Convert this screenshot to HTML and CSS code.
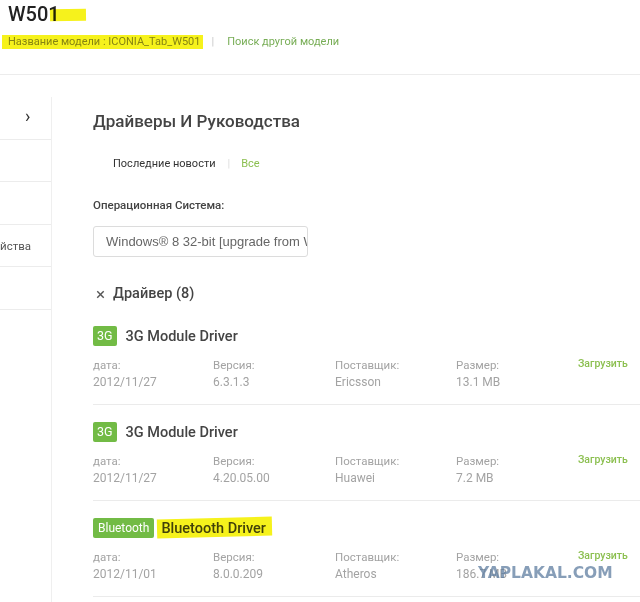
FILE: index.html
```html
<!DOCTYPE html>
<html lang="ru">
<head>
<meta charset="utf-8">
<title>W501</title>
<link rel="stylesheet" href="styles.css">
</head>
<body>
<header class="top">
  <h1 class="model"><span class="mark mark-title">W501</span></h1>
  <div class="sub">
    <span class="mark mark-sub">Название модели : ICONIA_Tab_W501</span>
    <span class="sep">|</span>
    <a class="green-link" href="#">Поиск другой модели</a>
  </div>
</header>
<div class="layout">
  <aside class="side">
    <div class="side-row"><span class="chev">›</span></div>
    <div class="side-row"></div>
    <div class="side-row"></div>
    <div class="side-row side-text">йства</div>
    <div class="side-row"></div>
  </aside>
  <main class="main">
    <h2 class="heading">Драйверы И Руководства</h2>
    <div class="tabs">
      <span class="tab">Последние новости</span>
      <span class="tab-sep">|</span>
      <span class="tab tab-all">Все</span>
    </div>
    <div class="os-label">Операционная Система:</div>
    <div class="select"><span class="select-text">Windows® 8 32-bit [upgrade from Windows 7]</span></div>
    <div class="group"><span class="x">×</span>Драйвер (8)</div>

    <div class="item">
      <div class="item-head"><span class="badge">3G</span><span class="title">3G Module Driver</span></div>
      <div class="meta">
        <div class="col"><div class="lbl">дата:</div><div class="val">2012/11/27</div></div>
        <div class="col"><div class="lbl">Версия:</div><div class="val">6.3.1.3</div></div>
        <div class="col"><div class="lbl">Поставщик:</div><div class="val">Ericsson</div></div>
        <div class="col"><div class="lbl">Размер:</div><div class="val">13.1 MB</div></div>
        <div class="col"><a class="dl" href="#">Загрузить</a></div>
      </div>
    </div>

    <div class="item">
      <div class="item-head"><span class="badge">3G</span><span class="title">3G Module Driver</span></div>
      <div class="meta">
        <div class="col"><div class="lbl">дата:</div><div class="val">2012/11/27</div></div>
        <div class="col"><div class="lbl">Версия:</div><div class="val">4.20.05.00</div></div>
        <div class="col"><div class="lbl">Поставщик:</div><div class="val">Huawei</div></div>
        <div class="col"><div class="lbl">Размер:</div><div class="val">7.2 MB</div></div>
        <div class="col"><a class="dl" href="#">Загрузить</a></div>
      </div>
    </div>

    <div class="item">
      <div class="item-head"><span class="badge badge-wide">Bluetooth</span><span class="title mark mark-bt">Bluetooth Driver</span></div>
      <div class="meta">
        <div class="col"><div class="lbl">дата:</div><div class="val">2012/11/01</div></div>
        <div class="col"><div class="lbl">Версия:</div><div class="val">8.0.0.209</div></div>
        <div class="col"><div class="lbl">Поставщик:</div><div class="val">Atheros</div></div>
        <div class="col"><div class="lbl">Размер:</div><div class="val">186.7 MB</div></div>
        <div class="col"><a class="dl" href="#">Загрузить</a></div>
      </div>
    </div>
  </main>
</div>
<div class="watermark">YAPLAKAL.COM</div>
</body>
</html>
```

FILE: styles.css
```css
* { box-sizing: border-box; }
html, body { margin: 0; padding: 0; background: #fff; }
body {
  font-family: Roboto, "Noto Sans", sans-serif;
  color: #333;
  width: 640px;
  height: 602px;
  overflow: hidden;
  position: relative;
}
a { text-decoration: none; }

.mark { position: relative; }
.mark::after {
  content: "";
  position: absolute;
  background: #f6f21c;
  mix-blend-mode: multiply;
  pointer-events: none;
}

.top {
  height: 75px;
  border-bottom: 1px solid #ececec;
  padding: 2px 0 0 8px;
}
.model {
  margin: 0;
  font-size: 20px;
  font-weight: 500;
  line-height: 24px;
  color: #222;
}
.mark-title::after { left: 42px; width: 36px; top: 7px; height: 12px; transform: rotate(-1deg); }

.sub {
  margin-top: 5px;
  font-size: 11px;
  color: #8c8c8c;
  display: flex;
  align-items: center;
  height: 20px;
}
.mark-sub::after { left: -6px; right: -3px; top: 0; bottom: -1px; }
.sep { color: #c8c8c8; margin: 0 13px 0 11px; }
.green-link { color: #77ad55; }

.layout { display: flex; }
.side {
  width: 52px;
  flex: none;
  margin-top: 22px;
  border-right: 1px solid #efefef;
  height: 506px;
}
.side-row {
  height: 42.6px;
  border-bottom: 1px solid #ececec;
  display: flex;
  align-items: center;
  font-size: 11.5px;
  color: #555;
}
.chev {
  margin-left: 25px;
  font-size: 18px;
  color: #333;
  line-height: 1;
  margin-top: -4px;
}

.main { flex: 1; padding-left: 41px; padding-top: 35px; }
.heading {
  margin: 0;
  font-size: 17px;
  font-weight: 500;
  color: #444;
  line-height: 22px;
}
.tabs {
  margin-top: 21px;
  margin-left: 20px;
  font-size: 11px;
  display: flex;
  align-items: center;
  height: 20px;
}
.tab { color: #333; }
.tab-sep { color: #ddd; margin: 0 11px 0 12px; }
.tab-all { color: #8bbf4f; }
.os-label {
  margin-top: 22px;
  font-size: 11.5px;
  font-weight: 500;
  color: #444;
  line-height: 20px;
}
.select {
  margin-top: 11px;
  width: 215px;
  height: 31px;
  border: 1px solid #dcdcdc;
  border-radius: 3px;
  padding: 0 0 0 12px;
  font-family: "Liberation Sans", Arial, sans-serif;
  font-size: 13px;
  color: #666;
  line-height: 29px;
  white-space: nowrap;
  overflow: hidden;
}
.group {
  margin-top: 26px;
  margin-left: 3px;
  font-size: 14.5px;
  font-weight: 500;
  color: #444;
  line-height: 22px;
  display: flex;
  align-items: center;
}
.x { font-weight: 400; font-size: 17px; margin-right: 8px; color: #555; }

.item {
  border-bottom: 1px solid #ebebeb;
  padding: 17px 0 13px;
}
.group + .item { padding-top: 21px; }
.item-head { display: flex; align-items: center; height: 20px; }
.badge {
  background: #72bb45;
  color: #fff;
  font-size: 12.5px;
  height: 20px;
  line-height: 20px;
  padding: 0 4px;
  border-radius: 2px;
  min-width: 23px;
  text-align: center;
  margin-right: 9px;
}
.badge-wide { padding: 0 5px; margin-right: 7px; font-size: 12px; }
.title {
  font-size: 14.5px;
  font-weight: 500;
  color: #444;
}
.mark-bt::after { left: -4px; right: -6px; top: -2px; bottom: 0; transform: rotate(-1.5deg); }
.meta {
  display: grid;
  grid-template-columns: 120px 122px 121px 122px 1fr;
  margin-top: 11px;
  font-size: 11.5px;
  color: #a3a3a3;
}
.lbl { line-height: 17px; }
.val { line-height: 17px; font-size: 12px; }
.dl {
  color: #8bbf4f;
  font-size: 10.5px;
  font-weight: 500;
  line-height: 17px;
  display: block;
  margin-top: -2px;
}

.watermark {
  position: absolute;
  left: 478px;
  top: 564px;
  font-family: "DejaVu Sans", sans-serif;
  font-weight: 700;
  font-size: 15.5px;
  color: rgba(95, 125, 160, 0.75);
}
```
